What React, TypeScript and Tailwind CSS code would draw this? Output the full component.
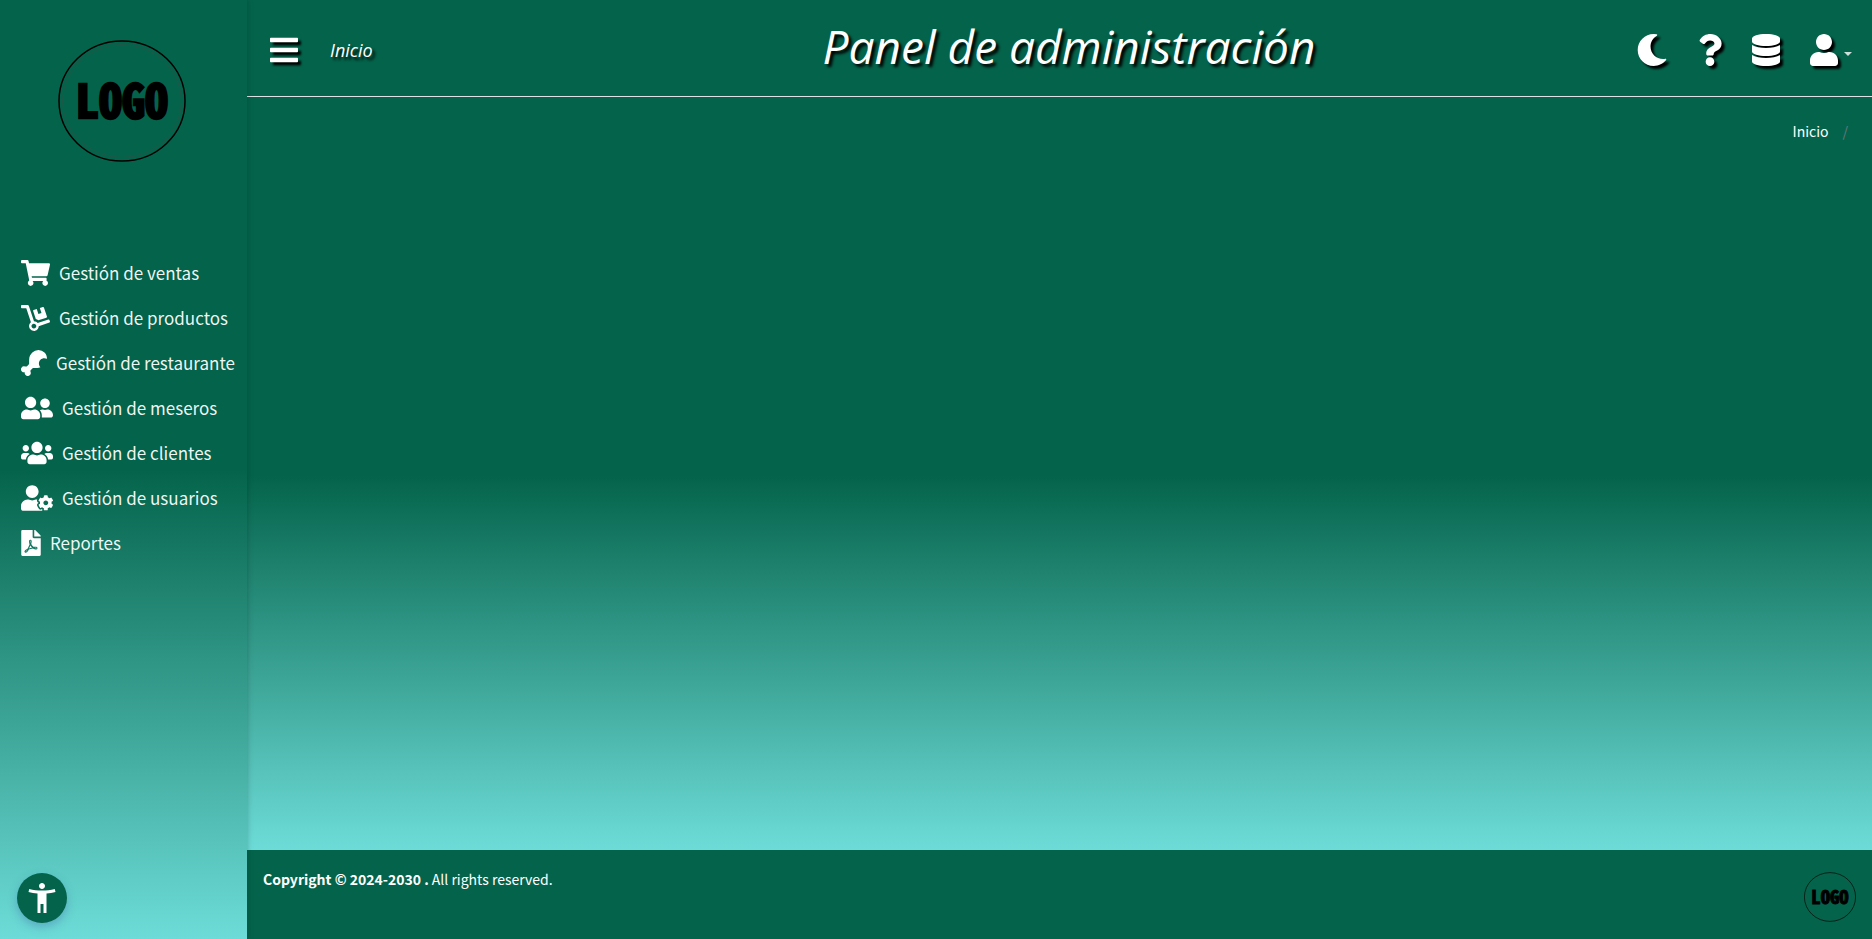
import React from "react";
import {
  FaBars,
  FaDatabase,
  FaDolly,
  FaDrumstickBite,
  FaFilePdf,
  FaMoon,
  FaQuestion,
  FaShoppingCart,
  FaUser,
  FaUserCog,
  FaUserFriends,
  FaUsers,
} from "react-icons/fa";
import type { IconType } from "react-icons";

const menu: { label: string; icon: IconType; width: string }[] = [
  { label: "Gestión de ventas", icon: FaShoppingCart, width: "w-[29px]" },
  { label: "Gestión de productos", icon: FaDolly, width: "w-[29px]" },
  { label: "Gestión de restaurante", icon: FaDrumstickBite, width: "w-[26px]" },
  { label: "Gestión de meseros", icon: FaUserFriends, width: "w-8" },
  { label: "Gestión de clientes", icon: FaUsers, width: "w-8" },
  { label: "Gestión de usuarios", icon: FaUserCog, width: "w-8" },
  { label: "Reportes", icon: FaFilePdf, width: "w-5" },
];

function Logo({ className, ring }: { className: string; ring: number }) {
  return (
    <svg viewBox="0 0 128 122" className={className} role="img" aria-label="Logo">
      <ellipse cx="64" cy="61" rx="63" ry="60" fill="none" stroke="#000" strokeWidth={ring} />
      <ellipse cx="64" cy="61" rx="59.5" ry="56.5" fill="none" stroke="#3b4a45" strokeWidth="0.5" />
      <text
        x="64"
        y="78"
        textAnchor="middle"
        fontSize="46"
        fontWeight="700"
        stroke="#000"
        strokeWidth="2.5"
        className="font-['Noto_Sans_Mono_CJK_JP','DejaVu_Sans_Mono',monospace]"
      >
        LOGO
      </text>
    </svg>
  );
}

function Sidebar() {
  return (
    <aside className="relative z-10 flex w-[247px] shrink-0 flex-col bg-[linear-gradient(#04644b_50%,#6ddcd8)] shadow-[0_0_6px_rgba(0,0,0,0.25)]">
      <a href="#inicio" className="mt-10 flex justify-center pr-1">
        <Logo className="h-[122px] w-32" ring={1.5} />
      </a>
      <nav className="mt-[90px] flex flex-col gap-1 pl-[21px]">
        {menu.map(({ label, icon: Icon, width }) => (
          <a
            key={label}
            href="#"
            className="flex h-[41px] items-center gap-[9px] text-[17px] whitespace-nowrap text-white/95"
          >
            <Icon className={`h-[26px] text-white ${width}`} />
            {label}
          </a>
        ))}
      </nav>
      <button
        type="button"
        aria-label="Accesibilidad"
        className="mt-auto mb-4 ml-[17px] flex size-[50px] items-center justify-center rounded-full bg-[#04644b] shadow-[0_4px_10px_rgba(60,90,160,0.35)]"
      >
        <svg viewBox="0 0 24 24" className="size-9 fill-white">
          <path d="M20.5 6c-2.61.7-5.67 1-8.5 1s-5.89-.3-8.5-1L3 8c1.86.5 4 .83 6 1v13h2v-6h2v6h2V9c2-.17 4.14-.5 6-1l-.5-2zM12 6c1.1 0 2-.9 2-2s-.9-2-2-2-2 .9-2 2 .9 2 2 2z" />
        </svg>
      </button>
    </aside>
  );
}

function Header() {
  return (
    <header className="flex h-[97px] items-center justify-between border-b border-[#dee2e6] pr-5 pl-[23px] font-['Open_Sans',sans-serif]">
      <div className="flex flex-1 items-center gap-8 pt-1">
        <button type="button" aria-label="Menú">
          <FaBars className="h-8 w-7 drop-shadow-[3px_3px_1px_#000]" />
        </button>
        <a href="#inicio" className="text-lg italic [text-shadow:3px_3px_3px_#000]">
          Inicio
        </a>
      </div>
      <h1 className="pb-1 pl-4 text-[46px] leading-none italic [text-shadow:3px_3px_3px_#000]">
        Panel de administración
      </h1>
      <div className="flex flex-1 items-center justify-end gap-[30px] pt-1">
        <button type="button" aria-label="Modo oscuro">
          <FaMoon className="size-8 drop-shadow-[3px_3px_1px_#000]" />
        </button>
        <button type="button" aria-label="Ayuda">
          <FaQuestion className="h-8 w-6 drop-shadow-[3px_3px_1px_#000]" />
        </button>
        <button type="button" aria-label="Base de datos">
          <FaDatabase className="h-8 w-7 drop-shadow-[3px_3px_1px_#000]" />
        </button>
        <button type="button" aria-label="Usuario" className="flex items-center gap-1.5">
          <FaUser className="h-8 w-7 drop-shadow-[3px_3px_1px_#000]" />
          <svg viewBox="0 0 8 4" className="mt-2 h-1 w-2 fill-white/80">
            <path d="M0 0h8L4 4z" />
          </svg>
        </button>
      </div>
    </header>
  );
}

export default function App() {
  return (
    <div className="flex min-h-screen bg-[#04644b] font-['Noto_Sans_CJK_JP',sans-serif] text-white">
      <Sidebar />
      <div className="flex flex-1 flex-col">
        <div className="flex flex-1 flex-col bg-[linear-gradient(#04644b_56%,#6ddcd8)]">
          <Header />
          <nav aria-label="Ruta" className="flex justify-end gap-3.5 pt-6 pr-6 text-sm">
            <a href="#inicio">Inicio</a>
            <span className="text-[#6c757d]">/</span>
          </nav>
        </div>
        <footer className="flex h-[89px] justify-between bg-[#04644b] pr-4 pl-4">
          <p className="pt-[19px] text-sm">
            <strong className="font-bold">Copyright © 2024-2030 .</strong> All rights reserved.
          </p>
          <Logo className="mt-[22px] h-[50px] w-[52px]" ring={1.6} />
        </footer>
      </div>
    </div>
  );
}
